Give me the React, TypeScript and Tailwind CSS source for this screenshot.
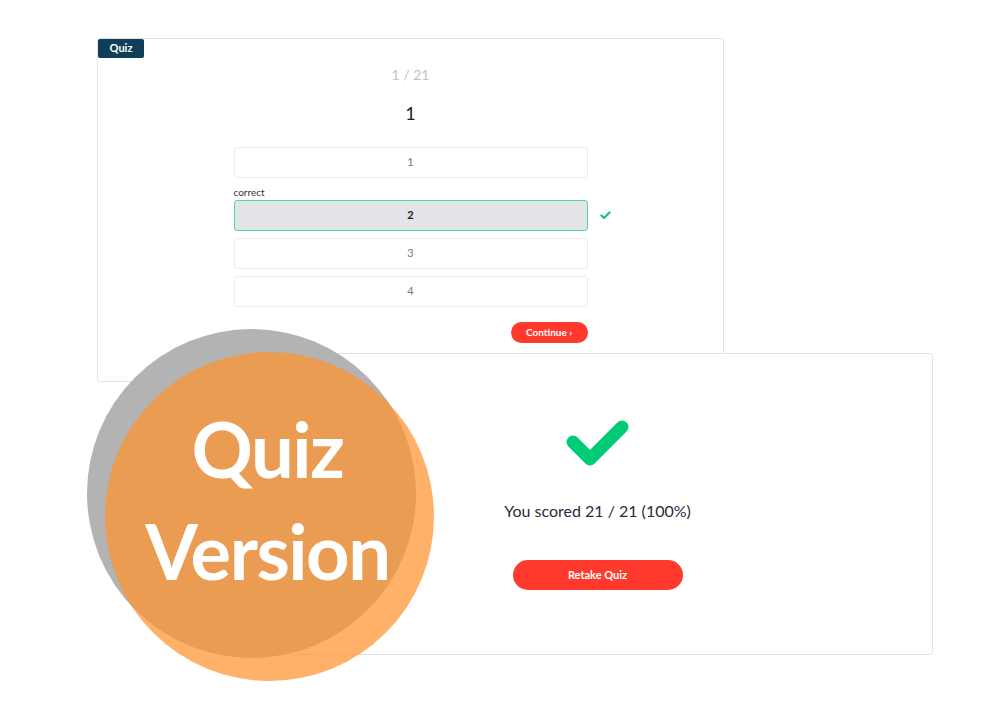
import React from "react";

const font = { fontFamily: "Lato, 'Open Sans', sans-serif" };

function BigCheck() {
  return (
    <svg width="64" height="50" viewBox="0 0 64 50">
      <polyline
        points="7,23 24,40 56,8"
        fill="none"
        stroke="#00cc77"
        strokeWidth="13"
        strokeLinecap="round"
        strokeLinejoin="round"
      />
    </svg>
  );
}

function SmallCheck() {
  return (
    <svg width="11" height="9" viewBox="0 0 11 9">
      <polyline
        points="1.5,4.5 4,7 9.5,1.5"
        fill="none"
        stroke="#1fc77a"
        strokeWidth="2.4"
        strokeLinecap="round"
        strokeLinejoin="round"
      />
    </svg>
  );
}

function Option({ label, selected }: { label: string; selected?: boolean }) {
  return (
    <div
      className={
        selected
          ? "relative flex h-[31px] w-[354px] items-center justify-center rounded-[3px] border border-[#4ed99d] bg-[#e3e4e8] text-[11px] font-bold text-[#222]"
          : "flex h-[31px] w-[354px] items-center justify-center rounded-[3px] border border-[#ececec] bg-white text-[11px] text-[#777]"
      }
    >
      {label}
      {selected && (
        <div className="absolute left-[365px] top-[10px]">
          <SmallCheck />
        </div>
      )}
    </div>
  );
}

export default function App() {
  return (
    <div className="relative h-[708px] w-[1007px] overflow-hidden bg-white" style={font}>
      {/* Card 1 */}
      <div className="absolute left-[97px] top-[38px] flex h-[344px] w-[627px] flex-col items-center rounded-[3px] border border-[#e4e4e4] bg-white">
        <div className="absolute left-0 top-0 flex h-[19px] w-[46px] items-center justify-center rounded-[2px] bg-[#0e3e58] text-[11px] font-bold text-white">
          Quiz
        </div>
        <div className="mt-[26px] h-[20px] text-[14px] leading-[20px] text-[#c4c4c4]">1 / 21</div>
        <div className="mt-[16px] h-[24px] text-[18px] leading-[24px] text-[#222]">1</div>
        <div className="mt-[22px] flex flex-col">
          <Option label="1" />
          <div className="mt-[8px] h-[12px] text-[10px] leading-[12px] text-[#333]">correct</div>
          <div className="mt-[2px]">
            <Option label="2" selected />
          </div>
          <div className="mt-[7px]">
            <Option label="3" />
          </div>
          <div className="mt-[7px]">
            <Option label="4" />
          </div>
          <div className="mt-[15px] flex justify-end">
            <div className="flex h-[21px] w-[77px] items-center justify-center rounded-full bg-[#ff3a2c] text-[10px] font-bold text-white">
              Continue ›
            </div>
          </div>
        </div>
      </div>

      {/* Card 2 */}
      <div className="absolute left-[262px] top-[353px] flex h-[302px] w-[671px] flex-col items-center rounded-[3px] border border-[#e4e4e4] bg-white">
        <div className="absolute left-0 top-0 flex h-[21px] w-[47px] items-center justify-center rounded-[2px] bg-[#857a90] text-[11px] font-bold text-[#b7a7b0]">
          Quiz
        </div>
        <div className="mt-[65px]">
          <BigCheck />
        </div>
        <div className="mt-[31px] text-[16px] leading-[22px] text-[#2a2b3a]">You scored 21 / 21 (100%)</div>
        <div className="mt-[38px] flex h-[30px] w-[170px] items-center justify-center rounded-full bg-[#ff3a2c] text-[11px] font-bold text-white">
          Retake Quiz
        </div>
      </div>

      {/* Circles */}
      <div className="absolute left-[87px] top-[329px] h-[329px] w-[329px] rounded-full bg-[#b3b3b3]" />
      <div className="absolute left-[105px] top-[352px] h-[329px] w-[329px] rounded-full bg-[rgba(255,147,45,0.72)]" />
      <div className="absolute left-[103px] top-[352px] flex h-[329px] w-[329px] flex-col items-center justify-center pb-[34px] text-white">
        <div className="text-[76px] font-bold leading-[102px] tracking-[-1.5px]">Quiz</div>
        <div className="text-[76px] font-bold leading-[102px] tracking-[-1.5px]">Version</div>
      </div>
    </div>
  );
}
